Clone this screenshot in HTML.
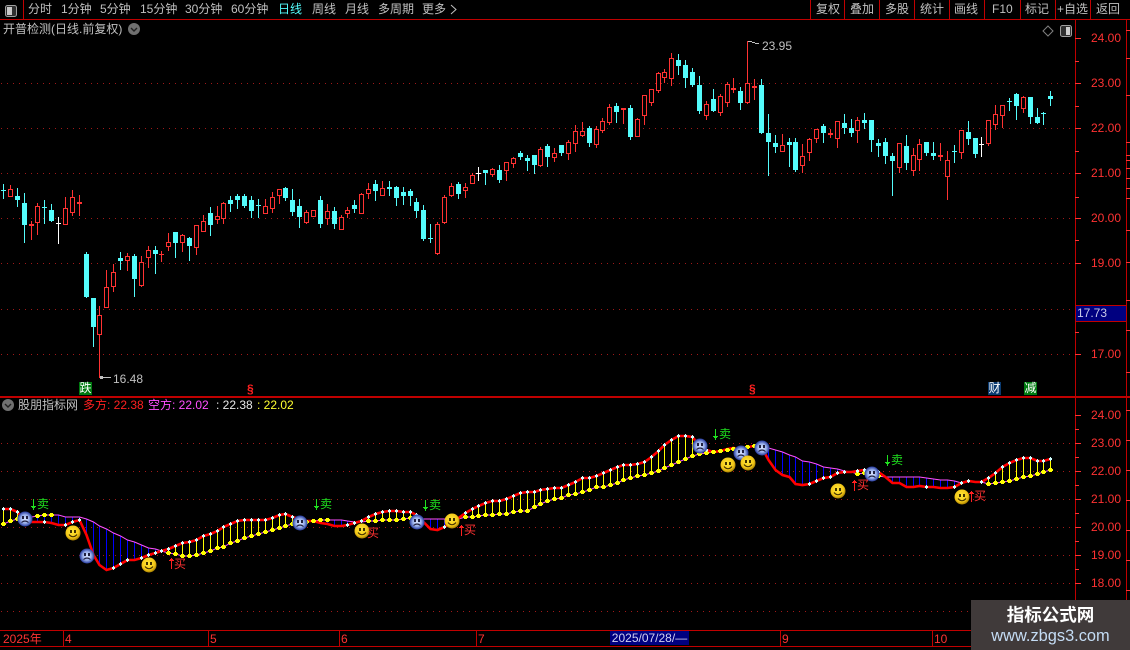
<!DOCTYPE html>
<html><head><meta charset="utf-8"><style>
html,body{margin:0;padding:0;background:#000}
#r{position:relative;width:1130px;height:650px;background:#000;overflow:hidden;font:12px/14px "Liberation Sans","WenQuanYi Zen Hei","Noto Sans CJK SC",sans-serif;color:#c0c0c0}
#r svg{position:absolute;left:0;top:0}
.t{position:absolute;white-space:nowrap}
.a{color:#ff3232}
.g{color:#1fe01f}
.m{color:#ff3232}
</style></head><body><div id="r">
<svg id="s" width="1130" height="650" shape-rendering="crispEdges" xmlns="http://www.w3.org/2000/svg">
<defs>
<radialGradient id="bl" cx="50%" cy="50%" r="50%"><stop offset="0" stop-color="#dce6ff"/><stop offset=".55" stop-color="#9cb2ec"/><stop offset="1" stop-color="#24389c"/></radialGradient>
<radialGradient id="yl" cx="45%" cy="40%" r="60%"><stop offset="0" stop-color="#ffe83a"/><stop offset=".7" stop-color="#f4c818"/><stop offset="1" stop-color="#a88000"/></radialGradient>
</defs>
</svg>
<div class="t" style="left:28px;top:2px">分时</div>
<div class="t" style="left:61px;top:2px">1分钟</div>
<div class="t" style="left:100px;top:2px">5分钟</div>
<div class="t" style="left:140px;top:2px">15分钟</div>
<div class="t" style="left:185px;top:2px">30分钟</div>
<div class="t" style="left:231px;top:2px">60分钟</div>
<div class="t" style="left:278px;top:2px;color:#54fcfc">日线</div>
<div class="t" style="left:312px;top:2px">周线</div>
<div class="t" style="left:345px;top:2px">月线</div>
<div class="t" style="left:378px;top:2px">多周期</div>
<div class="t" style="left:422px;top:2px">更多</div>
<div class="t" style="left:816px;top:2px">复权</div>
<div class="t" style="left:850px;top:2px">叠加</div>
<div class="t" style="left:885px;top:2px">多股</div>
<div class="t" style="left:920px;top:2px">统计</div>
<div class="t" style="left:954px;top:2px">画线</div>
<div class="t" style="left:992px;top:2px">F10</div>
<div class="t" style="left:1025px;top:2px">标记</div>
<div class="t" style="left:1057px;top:2px">+自选</div>
<div class="t" style="left:1096px;top:2px">返回</div>
<div class="t" style="left:3px;top:22px">开普检测(日线.前复权)</div>
<div class="t" style="left:762px;top:39px">23.95</div>
<div class="t" style="left:113px;top:372px">16.48</div>
<div class="t a" style="left:1091px;top:31px">24.00</div>
<div class="t a" style="left:1091px;top:76px">23.00</div>
<div class="t a" style="left:1091px;top:121px">22.00</div>
<div class="t a" style="left:1091px;top:166px">21.00</div>
<div class="t a" style="left:1091px;top:211px">20.00</div>
<div class="t a" style="left:1091px;top:256px">19.00</div>
<div class="t a" style="left:1091px;top:347px">17.00</div>
<div class="t" style="left:1077px;top:306px;color:#c8c8e8">17.73</div>
<div class="t" style="left:79px;top:382px;width:13px;height:13px;line-height:13px;background:#007a10;color:#fff;text-align:center">跌</div>
<div class="t" style="left:988px;top:382px;width:13px;height:13px;line-height:13px;background:#0a3a70;color:#fff;text-align:center">财</div>
<div class="t" style="left:1024px;top:382px;width:13px;height:13px;line-height:13px;background:#007a10;color:#fff;text-align:center">减</div>
<div class="t" style="left:247px;top:382px;color:#ff2020;font-weight:bold;font-size:12px">§</div>
<div class="t" style="left:749px;top:382px;color:#ff2020;font-weight:bold;font-size:12px">§</div>
<div class="t" style="left:18px;top:398px">股朋指标网</div>
<div class="t" style="left:83px;top:398px;color:#ff2020">多方: 22.38</div>
<div class="t" style="left:148px;top:398px;color:#ff50ff">空方: 22.02</div>
<div class="t" style="left:216px;top:398px;color:#e8e8e8">: 22.38</div>
<div class="t" style="left:257px;top:398px;color:#ffff30">: 22.02</div>
<div class="t a" style="left:1091px;top:408px">24.00</div>
<div class="t a" style="left:1091px;top:436px">23.00</div>
<div class="t a" style="left:1091px;top:464px">22.00</div>
<div class="t a" style="left:1091px;top:492px">21.00</div>
<div class="t a" style="left:1091px;top:520px">20.00</div>
<div class="t a" style="left:1091px;top:548px">19.00</div>
<div class="t a" style="left:1091px;top:576px">18.00</div>
<div class="t g" style="left:37px;top:497px">卖</div>
<div class="t g" style="left:320px;top:497px">卖</div>
<div class="t g" style="left:429px;top:498px">卖</div>
<div class="t g" style="left:719px;top:427px">卖</div>
<div class="t g" style="left:891px;top:453px">卖</div>
<div class="t m" style="left:174px;top:557px">买</div>
<div class="t m" style="left:367px;top:526px">买</div>
<div class="t m" style="left:464px;top:523px">买</div>
<div class="t m" style="left:857px;top:478px">买</div>
<div class="t m" style="left:974px;top:489px">买</div>
<div class="t a" style="left:3px;top:632px">2025年</div>
<div class="t a" style="left:65px;top:632px">4</div>
<div class="t a" style="left:210px;top:632px">5</div>
<div class="t a" style="left:341px;top:632px">6</div>
<div class="t a" style="left:478px;top:632px">7</div>
<div class="t" style="left:610px;top:631px;width:79px;height:14px;background:#000080;color:#d0d0f0;text-align:center">2025/07/28/—</div>
<div class="t a" style="left:782px;top:632px">9</div>
<div class="t a" style="left:934px;top:632px">10</div>
<div class="t" style="left:971px;top:600px;width:159px;height:50px;background:#403a3a"></div>
<div class="t" style="left:971px;top:605px;width:159px;line-height:20px;text-align:center;font-size:17.5px;font-weight:bold;color:#fff;font-family:'Liberation Sans','Noto Sans CJK SC',sans-serif">指标公式网</div>
<div class="t" style="left:971px;top:627px;width:159px;line-height:18px;text-align:center;font-size:16.4px;color:#c4dcf4">www.zbgs3.com</div>
</div>
<script>
var S=document.getElementById('s'),o='';
function L(a,b,c,d,col,w){o+='<line x1="'+a+'" y1="'+b+'" x2="'+c+'" y2="'+d+'" stroke="'+col+'" stroke-width="'+(w||1)+'"/>'}
function R(x,y,w,h,f,st){o+='<rect x="'+x+'" y="'+y+'" width="'+w+'" height="'+h+'" fill="'+f+'"'+(st?' stroke="'+st+'"':'')+'/>'}
var red='#c00000',tk='#ff3232';
[83,128,173,218,263,309,354,443,471,499,527,555,583,611].forEach(function(y){o+='<line x1="1" y1="'+(y+.5)+'" x2="1075" y2="'+(y+.5)+'" stroke="#a01818" stroke-dasharray="1 5"/>'});
R(0,19,1130,1,red);R(0,396,1130,2,red);R(0,630,1075,1,red);R(0,646,1075,1,red);
R(1075,20,1,630,red);R(1126,20,1,630,red);R(23,0,1,19,red);
[810,844,879,914,949,984,1020,1055,1090].forEach(function(x){R(x,0,1,19,red)});
[63,208,339,476,780,932].forEach(function(x){R(x,630,1,16,red)});
R(1075,305,52,1,red);R(1075,321,52,1,red);R(1076,306,50,15,'#000080');
[38,83,128,173,218,263,354,415,443,471,499,527,555,583].forEach(function(y){R(1075,y,6,1,tk)});
[61,106,151,197,240,332,429,457,485,513,541,569].forEach(function(y){R(1075,y,4,1,tk)});
[30,58,95,142,155,160,168,178,188,198,230,262,300,330,372,410,440,470,500,530,560,590,620].forEach(function(y){R(1126,y,4,1,tk)});
var c=[[3,184,190,191,198,0],[10,185,189,196,196,1],[17,188,196,200,206,0],[24,193,203,225,242,0],[31,221,224,226,239,1],[37,203,206,222,234,1],[44,200,207,208,223,0],[51,204,210,221,221,0],[58,217,223,224,243,2],[65,197,208,224,224,1],[72,190,197,212,215,1],[79,195,202,204,215,1],[86,252,254,297,297,0],[93,298,298,327,346,0],[99,306,315,334,377,1],[106,270,287,307,307,1],[113,264,272,286,291,1],[120,252,258,261,269,0],[127,253,256,260,270,1],[134,254,256,279,296,0],[141,256,262,285,286,1],[148,246,250,257,267,1],[155,246,250,254,273,0],[161,251,254,255,261,1],[168,233,242,246,250,1],[175,232,232,243,257,0],[182,234,235,242,251,1],[189,237,238,246,260,0],[196,225,225,247,254,1],[203,215,221,231,231,1],[210,207,213,225,235,0],[217,206,216,219,223,1],[223,202,203,218,223,1],[230,196,200,204,211,0],[237,194,196,200,208,0],[244,194,196,206,207,0],[251,196,200,211,217,0],[258,199,205,206,217,0],[265,199,206,213,213,1],[272,192,197,208,212,1],[279,189,189,195,203,1],[285,187,188,198,200,0],[292,189,200,212,215,0],[299,199,206,217,227,0],[306,210,212,222,223,1],[313,210,210,216,216,1],[320,196,200,224,227,0],[327,204,211,218,224,1],[334,207,211,224,228,0],[341,215,217,229,229,1],[347,207,210,213,217,1],[354,200,205,209,212,0],[361,193,194,213,213,1],[368,183,189,193,198,1],[375,180,184,191,200,0],[382,181,188,195,195,1],[389,181,187,189,195,0],[396,186,187,198,205,0],[403,187,192,196,204,0],[410,189,191,196,205,0],[416,198,202,211,217,0],[423,205,210,239,240,0],[430,224,238,239,242,0],[437,222,224,253,254,1],[444,195,197,222,223,1],[451,183,186,195,196,1],[458,182,184,194,198,0],[465,183,187,190,197,1],[472,173,175,183,183,1],[478,167,173,174,180,2],[485,170,170,173,184,0],[492,168,169,174,176,1],[499,165,170,180,182,0],[506,162,162,170,180,1],[513,157,158,163,167,1],[520,151,153,157,159,0],[527,155,158,161,170,0],[534,155,155,165,173,0],[540,147,149,165,166,1],[547,144,146,157,166,0],[554,148,153,157,161,1],[561,145,145,153,155,0],[568,140,142,153,159,1],[575,125,131,143,151,1],[582,122,131,135,136,1],[589,126,128,143,146,0],[596,126,129,144,147,1],[602,118,121,130,132,1],[609,104,107,122,124,1],[616,103,106,112,122,0],[623,108,108,110,123,1],[630,105,108,137,139,0],[637,118,119,136,136,1],[644,95,95,115,124,1],[651,89,89,102,105,1],[658,72,73,90,92,1],[664,69,72,77,82,1],[671,53,58,78,85,1],[678,54,60,66,74,0],[685,60,65,78,87,0],[692,68,72,85,86,0],[699,76,85,111,113,0],[706,101,104,115,119,1],[713,89,99,111,111,0],[720,94,96,112,115,1],[727,82,84,102,106,1],[733,78,88,90,92,1],[740,87,91,103,109,0],[747,41,83,102,103,1],[754,79,86,88,99,1],[761,79,85,133,133,0],[768,114,133,142,175,0],[775,135,143,147,152,0],[782,134,145,151,151,1],[789,138,142,145,166,0],[795,138,142,170,171,0],[802,144,156,165,172,1],[809,138,139,152,160,1],[816,129,129,138,142,1],[823,124,126,133,142,0],[830,129,133,135,137,1],[837,121,121,138,147,1],[844,114,123,128,133,0],[851,119,128,133,136,0],[857,117,120,130,142,1],[864,113,120,123,128,0],[871,120,120,140,151,0],[878,139,143,146,156,0],[885,138,142,156,163,0],[892,153,156,161,195,0],[899,143,143,167,172,1],[906,135,146,163,169,0],[913,148,155,170,175,1],[919,139,144,159,170,1],[926,142,142,153,155,0],[933,142,153,156,159,0],[940,143,155,157,160,1],[947,151,160,176,199,1],[954,145,151,152,162,0],[961,130,130,152,158,1],[968,121,132,139,144,0],[975,138,138,154,157,0],[981,137,144,145,156,2],[988,120,120,143,145,1],[995,105,114,124,129,1],[1002,105,105,115,127,1],[1009,98,101,102,110,0],[1016,93,94,106,119,0],[1023,96,97,108,112,1],[1030,97,97,117,123,0],[1037,108,117,123,123,0],[1043,112,113,114,124,0],[1050,91,96,99,105,0]];
c.forEach(function(d){var x=d[0],col=d[5]==0?'#54fcfc':d[5]==1?'#ff3232':'#fff';
 R(x,d[1],1,d[4]-d[1]+1,col);
 var h=d[3]-d[2];
 if(d[5]==1&&h>2){o+='<rect x="'+(x-1.5)+'" y="'+(d[2]+.5)+'" width="4" height="'+h+'" fill="#000" stroke="'+col+'"/>'}
 else R(x-2,d[2],5,Math.max(h,1),col);
});
L(748,41.5,752,41.5,'#c0c0c0');L(752,42.5,755,42.5,'#c0c0c0');L(755,43.5,759,43.5,'#c0c0c0');
R(100,377,11,1,'#c0c0c0');R(100,376,3,3,'#c0c0c0');
var p=[[3,509,524],[10,509,521],[17,512,519],[24,521,517],[31,522,517],[37,522,516],[44,522,515],[51,523,515],[58,525,515],[65,525,517],[72,522,517],[79,520,517],[86,535,519],[93,555,522],[99,565,526],[106,570,529],[113,568,533],[120,564,536],[127,560,540],[134,560,542],[141,558,545],[148,555,548],[155,553,549],[161,551,551],[168,549,553],[175,546,554],[182,543,556],[189,542,556],[196,540,555],[203,536,553],[210,534,551],[217,531,548],[223,527,547],[230,524,543],[237,521,541],[244,520,538],[251,520,536],[258,520,534],[265,520,532],[272,518,530],[279,515,528],[285,514,526],[292,517,524],[299,519,523],[306,521,522],[313,521,521],[320,523,520],[327,524,520],[334,526,520],[341,526,520],[347,525,521],[354,523,522],[361,521,522],[368,517,521],[375,514,521],[382,512,520],[389,511,520],[396,511,520],[403,512,519],[410,512,518],[416,515,518],[423,522,519],[430,529,519],[437,530,519],[444,527,519],[451,522,519],[458,518,519],[465,513,517],[472,509,517],[478,506,516],[485,503,515],[492,501,515],[499,501,514],[506,499,514],[513,496,512],[520,493,511],[527,492,511],[534,492,507],[540,490,504],[547,489,501],[554,488,499],[561,488,498],[568,485,495],[575,482,494],[582,478,492],[589,478,490],[596,476,487],[603,473,487],[610,470,485],[617,467,483],[623,465,480],[630,465,478],[637,464,476],[644,462,475],[651,457,473],[658,451,471],[664,445,468],[671,440,465],[678,436,462],[685,436,459],[692,437,456],[699,446,454],[706,450,453],[713,452,452],[720,451,451],[727,449,450],[733,448,449],[740,450,449],[747,447,447],[754,446,446],[761,447,447],[768,460,448],[775,470,450],[782,475,452],[789,477,455],[795,484,457],[802,485,461],[809,484,462],[816,481,464],[823,478,467],[830,477,468],[837,473,469],[844,472,471],[851,472,472],[857,471,474],[864,470,473],[871,472,475],[878,472,476],[885,477,477],[892,483,477],[899,483,477],[906,487,477],[913,487,477],[919,486,477],[926,487,478],[933,487,479],[940,488,480],[947,488,480],[954,487,481],[961,483,483],[968,481,482],[975,482,482],[981,482,482],[988,478,484],[995,473,483],[1002,467,482],[1009,463,481],[1016,460,479],[1023,458,477],[1030,458,476],[1037,461,474],[1043,461,472],[1050,459,470]];
p.forEach(function(d){var x=d[0];if(d[1]<d[2]-1)R(x,d[1],1,d[2]-d[1],'#ffff00');else if(d[1]>d[2]+1)R(x,d[2],1,d[1]-d[2],'#0000ff');});
o+='<g shape-rendering="auto" fill="none"><polyline stroke="#ff50ff" stroke-width="1" points="'+p.map(function(d){return d[0]+.5+','+d[2]}).join(' ')+'"/><polyline stroke="#ff0000" stroke-width="2.6" points="'+p.map(function(d){return d[0]+.5+','+d[1]}).join(' ')+'"/></g>';
var W=[44,65,72,79,113,120,127,141,148,155,161,347,354,361,444,451,809,816,823,830,837,844,857,864,926,954,961,968,981];
var Y=[37,44,51,306,313,320,327,706,713,720,727,733,740,747,754,761];
p.forEach(function(d){var x=d[0];
 if(d[1]<d[2]-1||Y.indexOf(x)>=0){R(x-1,d[2]-2,3,4,'#ffff00');R(x-2,d[2]-1,5,2,'#ffff00')}
 if(d[1]<d[2]-1||W.indexOf(x)>=0){R(x,d[1]-2,1,4,'#d0ffff');R(x-1,d[1]-1,3,2,'#d0ffff')}
});
[[33,504,1],[316,504,1],[425,505,1],[715,434,1],[887,460,1],[171,563,0],[461,530,0],[854,485,0],[971,496,0]].forEach(function(a){
 var col=a[2]?'#1fe01f':'#ff2020',x=a[0],y=a[1];R(x,y-5,1,11,col);
 if(a[2]){R(x-1,y+3,3,1,col);R(x-2,y+2,5,1,col)}else{R(x-1,y-4,3,1,col);R(x-2,y-3,5,1,col)}
});
o+='<g shape-rendering="auto">';
[[25,519],[87,556],[300,523],[417,522],[700,446],[741,453],[762,448],[872,474]].forEach(function(e){var x=e[0],y=e[1];
 o+='<circle cx="'+x+'" cy="'+y+'" r="7.5" fill="url(#bl)"/><rect x="'+(x-3)+'" y="'+(y-3)+'" width="2" height="3" fill="#202040"/><rect x="'+(x+1)+'" y="'+(y-3)+'" width="2" height="3" fill="#202040"/><path d="M'+(x-3.5)+' '+(y+3.5)+'Q'+x+' '+(y+.5)+' '+(x+3.5)+' '+(y+3.5)+'" fill="none" stroke="#202040" stroke-width="1.1"/>'});
[[73,533],[149,565],[362,531],[452,521],[728,465],[748,463],[838,491],[962,497]].forEach(function(e){var x=e[0],y=e[1];
 o+='<circle cx="'+x+'" cy="'+y+'" r="7.5" fill="url(#yl)"/><rect x="'+(x-3)+'" y="'+(y-3)+'" width="2" height="3" fill="#403000"/><rect x="'+(x+1)+'" y="'+(y-3)+'" width="2" height="3" fill="#403000"/><path d="M'+(x-4)+' '+(y+1.5)+'Q'+x+' '+(y+6)+' '+(x+4)+' '+(y+1.5)+'" fill="none" stroke="#403000" stroke-width="1.1"/>'});
o+='<rect x="5.5" y="5.5" width="11" height="11" rx="2" fill="#303030" stroke="#a0a0a0"/><rect x="7" y="7" width="5" height="8" fill="#c8c8c8"/>';
o+='<rect x="1060.5" y="25.5" width="11" height="11" rx="2" fill="#303030" stroke="#a0a0a0"/><rect x="1066" y="27" width="4" height="8" fill="#d0d0d0"/>';
o+='<path d="M1048 26l5 5-5 5-5-5z" fill="none" stroke="#808080"/>';
o+='<path d="M451 5l5 4.5-5 4.5" fill="none" stroke="#c0c0c0"/>';
[[134,29],[8,405]].forEach(function(e){o+='<circle cx="'+e[0]+'" cy="'+e[1]+'" r="6" fill="#707070"/><path d="M'+(e[0]-3)+' '+(e[1]-1)+'l3 3 3-3" fill="none" stroke="#202020" stroke-width="1.4"/>'});
o+='</g>';
S.insertAdjacentHTML('beforeend',o);
</script>
</body></html>
